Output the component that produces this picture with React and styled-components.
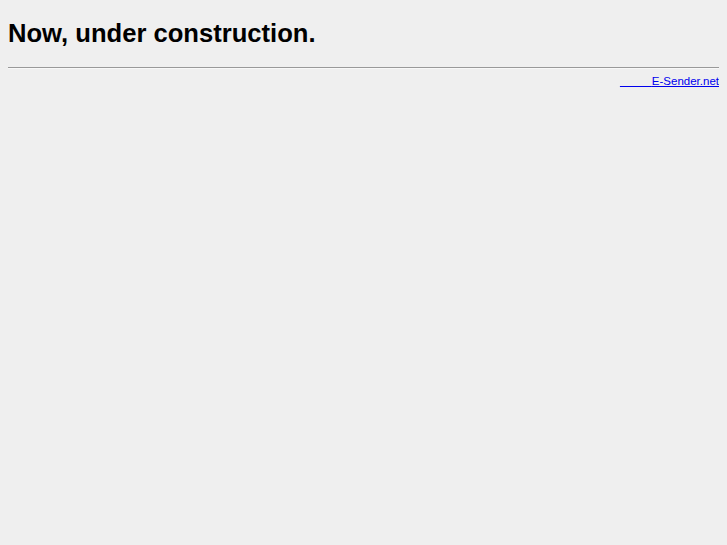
import React from 'react';
import styled, { createGlobalStyle } from 'styled-components';

const GlobalStyle = createGlobalStyle`
  html, body {
    background: #efefef;
  }
  body {
    margin: 8px;
    font-family: "Liberation Sans", Arial, sans-serif;
    color: #000;
  }
`;

const Title = styled.h1`
  font-size: 25.6px;
  font-weight: bold;
  margin: 11px 0 19px;
`;

const Rule = styled.hr`
  margin: 0;
  height: 0;
  border: 0;
  border-top: 1px solid #999;
  border-bottom: 1px solid #f8f8f8;
`;

const Footer = styled.div`
  text-align: right;
  font-size: 11.5px;
  margin-top: 6px;
`;

const Link = styled.a`
  color: #0000ee;
  text-decoration: underline;
`;

export default function App() {
  return (
    <>
      <GlobalStyle />
      <Title>Now, under construction.</Title>
      <Rule />
      <Footer>
        <Link href="#">{'\u00a0\u00a0\u00a0\u00a0\u00a0\u00a0\u00a0\u00a0\u00a0\u00a0'}E-Sender.net</Link>
      </Footer>
    </>
  );
}
